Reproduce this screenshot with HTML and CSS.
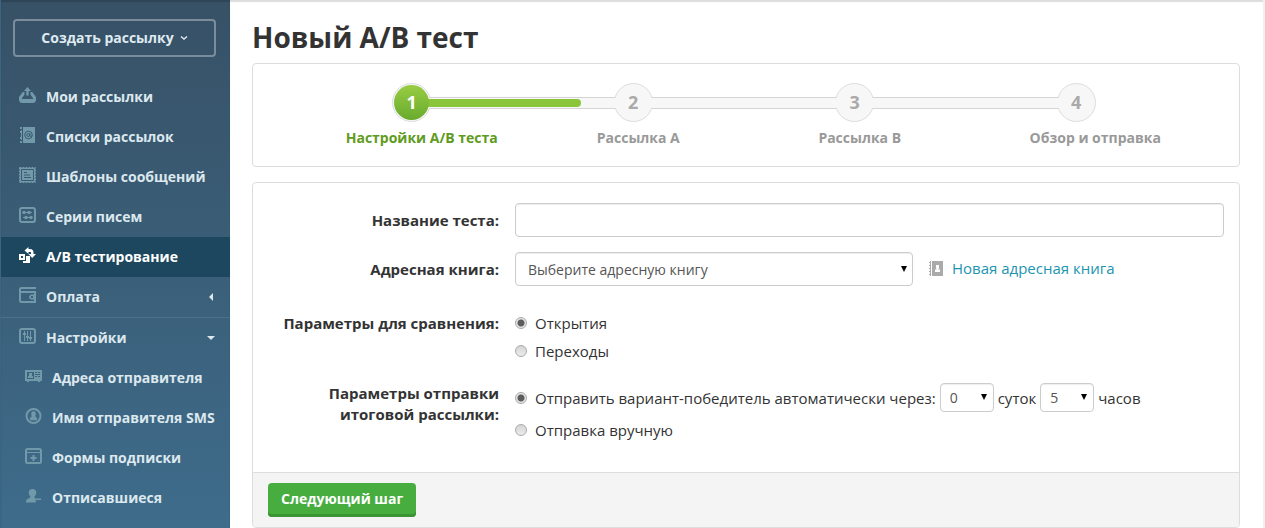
FILE: index.html
```
<!DOCTYPE html>
<html lang="ru">
<head>
  <meta charset="UTF-8">
  <meta name="viewport" content="width=device-width, initial-scale=1.0">
  <title>Новый А/В тест</title>
  <link rel="stylesheet" href="styles.css">
</head>
<body>
  <div class="page">
    <aside class="sidebar">
      <button class="create-btn" type="button">
        Создать рассылку
        <svg width="8" height="8" viewBox="0 0 8 8"><path d="M1 3.500l3 2.500 3-2.500" fill="none" stroke="currentColor" stroke-width="1.400"/></svg>
      </button>
      <nav>
        <ul class="menu">
          <li><a href="#">
            <svg class="icon" viewBox="0 0 17 16"><path d="M8.500 0L12 4H9.700v4.500H7.300V4H5z"/><path class="line" d="M5.500 6.500H4.500L1.500 10.500v2q0 2 2 2h10q2 0 2-2v-2l-3-4h-1" stroke-width="3"/><path d="M3 12h11v3H3z"/></svg>
            Мои рассылки</a></li>
          <li><a href="#">
            <svg class="icon" viewBox="0 0 17 16"><path d="M4 0h12v16H4zM1 0h2v2H1zM2 3h1v10H2zM1 4h1v2H1zM1 10h1v2H1zM1 14h2v2H1z"/><g class="cut"><circle cx="9.500" cy="8" r="3.800"/><circle cx="9.300" cy="8" r="1.500"/><path d="M10.800 6.300v2.500q.8 1.200 2.300 0"/></g></svg>
            Списки рассылок</a></li>
          <li><a href="#">
            <svg class="icon" viewBox="0 0 17 16"><path d="M1 1h15v14H1z"/><path class="line" d="M.5.500h16v15H.5z" stroke-dasharray="2 1"/><path class="cut" d="M2.500 2.500h12v11h-12zM5 5.500h3M5 8h6M5 10.500h7"/></svg>
            Шаблоны сообщений</a></li>
          <li><a href="#">
            <svg class="icon" viewBox="0 0 17 16"><rect class="line" x="1" y="1" width="15" height="14" rx="2" stroke-width="2"/><circle cx="5" cy="5.500" r="1.800"/><circle cx="10" cy="5.500" r="1.800"/><circle cx="7" cy="10.500" r="1.800"/><circle cx="12" cy="10.500" r="1.800"/><path d="M5 5h8v1H5zM4 10h9v1H4z"/></svg>
            Серии писем</a></li>
          <li class="active"><a href="#">
            <svg class="icon" viewBox="0 0 17 16"><path fill-rule="evenodd" d="M0 7h6v6H0zM2 9v2h2V9z"/><path d="M7 9h4v7H4v-2h3zM5.500 3.500L9.500 0v2H11q3.500 0 3.500 3.500V7H17l-3.800 4L9.500 7H12V5.500Q12 5 11.500 5h-2v2z"/></svg>
            А/В тестирование</a></li>
          <li><a href="#">
            <svg class="icon" viewBox="0 0 17 16"><path class="line" d="M17 1H2.500Q1 1 1 2.500v11Q1 15 2.500 15H16V5H1" stroke-width="2"/><path fill-rule="evenodd" d="M12 7.500h3v5h-3q-2-1-2-2.500t2-2.500zM12 9v2h2V9z"/></svg>
            Оплата
            <svg class="arrow" viewBox="0 0 8 8"><path d="M6 0v8L2 4z"/></svg></a></li>
          <li class="divided"><a href="#">
            <svg class="icon" viewBox="0 0 17 16"><rect class="line" x="1" y="1" width="15" height="14" rx="2" stroke-width="2"/><path d="M5 3h1v10H5zM8 3h1v10H8zM11 3h1v10h-1zM4 5h3v2H4zM7 8h3v2H7zM10 9h3v2h-3z"/></svg>
            Настройки
            <svg class="arrow" viewBox="0 0 8 8"><path d="M0 2h8L4 6z"/></svg></a>
            <ul class="submenu">
              <li><a href="#">
                <svg class="icon" viewBox="0 0 17 16"><path d="M0 2h17v11h-2v1h-2v-1H4v1H2v-1H0z"/><path class="hole" d="M2 4h7v7H2zM10 4h2v1h-2zM13 4h2v1h-2zM10 6h5v1h-5zM10 8h2v1h-2zM13 8h2v1h-2z"/><path d="M4 5h3v3H4zM3 8h5v2H3z"/></svg>
                Адреса отправителя</a></li>
              <li><a href="#">
                <svg class="icon" viewBox="0 0 17 16"><circle class="line" cx="8.500" cy="8" r="7" stroke-width="2"/><path d="M8.500 3.200q2.300 0 2.300 2.700 0 1.200-.8 2.300 2 .6 2 2.600v1.400H5v-1.400q0-2 2-2.600-.8-1.100-.8-2.300 0-2.700 2.300-2.700z"/></svg>
                Имя отправителя SMS</a></li>
              <li><a href="#">
                <svg class="icon" viewBox="0 0 17 16"><rect class="line" x="1" y="1" width="15" height="14" rx="1.500" stroke-width="2"/><path d="M2 4h13v1H2zM7.500 7h2v2h2v2h-2v2h-2v-2h-2V9h2z"/></svg>
                Формы подписки</a></li>
              <li><a href="#">
                <svg class="icon" viewBox="0 0 17 16"><path d="M7.500 1q3.800 0 3.800 3.800 0 2.400-2 4 .2 1.200 1.500 1.700V14.500H1v-1.500q0-1.800 2.500-2.500 2-.6 2-1.700Q3.700 7.200 3.700 4.800 3.700 1 7.500 1zM11 10.500h5V12h-5z"/></svg>
                Отписавшиеся</a></li>
            </ul>
          </li>
        </ul>
      </nav>
    </aside>

    <main class="content">
      <h1>Новый А/В тест</h1>

      <section class="panel steps-panel">
        <ol class="steps">
          <li class="step current"><span class="circle"><span class="num">1</span></span><span class="step-name">Настройки А/В теста</span></li>
          <li class="step"><span class="circle"><span class="num">2</span></span><span class="step-name">Рассылка А</span></li>
          <li class="step"><span class="circle"><span class="num">3</span></span><span class="step-name">Рассылка В</span></li>
          <li class="step last"><span class="circle"><span class="num">4</span></span><span class="step-name">Обзор и отправка</span></li>
          <li class="track" aria-hidden="true"></li>
          <li class="track-fill" aria-hidden="true"><span class="progress" style="width: 25.400%"></span></li>
        </ol>
      </section>

      <form class="panel">
        <div class="form-body">
          <div class="row">
            <label class="row-label" for="test-name">Название теста:</label>
            <input class="text-input" type="text" id="test-name">
          </div>
          <div class="row book-row">
            <label class="row-label" for="book">Адресная книга:</label>
            <div class="book">
              <span class="select book-select">
                <select id="book"><option>Выберите адресную книгу</option></select>
              </span>
              <a class="new-book" href="#">
                <svg viewBox="0 0 14 15" width="14" height="15"><path d="M3 0h11v15H3zM0 1h2v1H0zM0 4h2v1H0zM0 7h2v1H0zM0 10h2v1H0zM0 13h2v1H0zM1 0h1v15H1z"/><path fill="#fff" d="M7 4h3v3.500H9.500v1H11V11H6V8.500h1.500v-1H7z"/></svg>
                Новая адресная книга
              </a>
            </div>
          </div>
          <div class="row compare-row" role="radiogroup" aria-labelledby="compare-label">
            <span class="row-label" id="compare-label">Параметры для сравнения:</span>
            <div class="options">
              <label class="option"><input type="radio" name="compare" checked>Открытия</label>
              <label class="option"><input type="radio" name="compare">Переходы</label>
            </div>
          </div>
          <div class="row send-row" role="radiogroup" aria-labelledby="send-label">
            <span class="row-label" id="send-label">Параметры отправки итоговой рассылки:</span>
            <div class="options">
              <div class="delay">
                <label class="option"><input type="radio" name="send" checked>Отправить вариант-победитель автоматически через:</label>
                <span class="select small"><select id="days"><option>0</option><option>1</option></select></span>
                <label for="days">суток</label>
                <span class="select small"><select id="hours"><option>5</option><option>6</option></select></span>
                <label for="hours">часов</label>
              </div>
              <label class="option"><input type="radio" name="send">Отправка вручную</label>
            </div>
          </div>
        </div>
        <div class="form-footer">
          <button class="next-btn" type="submit">Следующий шаг</button>
        </div>
      </form>
    </main>
  </div>
</body>
</html>
```
FILE: styles.css
```
* {
  box-sizing: border-box;
}
body {
  margin: 0;
  font-family: "Open Sans", "Noto Sans", sans-serif;
  font-size: 15px;
  line-height: 20px;
  color: #333;
  background-color: #fff;
}
button, input, select {
  font-family: inherit;
}
ul, ol {
  list-style: none;
  margin: 0;
  padding: 0;
}
a {
  text-decoration: none;
}
.page {
  display: flex;
  min-height: 100vh;
  border-right: 2px solid #f0f0f0;
}

/* sidebar */
.sidebar {
  flex: 0 0 230px;
  padding-top: 19px;
  background: linear-gradient(#375166, #3e6c8b);
  border-left: 1px solid #3d6582;
  box-shadow: inset 0 2px 1px #2e4557;
}
.create-btn {
  display: flex;
  align-items: center;
  justify-content: center;
  gap: 6px;
  width: 203px;
  height: 38px;
  margin: 0 12px 20px;
  padding: 0 0 2px;
  font-size: 14px;
  font-weight: bold;
  color: #dfeaf0;
  background: none;
  border: 2px solid #7b8d9b;
  border-radius: 4px;
  cursor: pointer;
}
.menu a {
  display: flex;
  align-items: center;
  gap: 10px;
  height: 40px;
  padding: 0 15px 0 18px;
  font-size: 14px;
  font-weight: bold;
  color: #dce8ee;
  white-space: nowrap;
}
.menu .active a {
  color: #fff;
  background-color: #1d475e;
}
.menu .divided {
  border-top: 1px solid #4b7189;
}
.submenu a {
  padding: 0 0 0 24px;
}
.icon {
  flex: none;
  width: 17px;
  height: 16px;
  margin-bottom: 4px;
  fill: #7199a9;
}
.icon .line {
  fill: none;
  stroke: #7199a9;
}
.icon .cut {
  fill: none;
  stroke: #3a5b73;
}
.icon .hole {
  fill: #3c637e;
}
.active .icon {
  fill: #fff;
}
.arrow {
  width: 8px;
  height: 8px;
  margin-left: auto;
  fill: #dce8ee;
}

/* content */
.content {
  flex: 1;
  min-width: 0;
  padding: 19px 23px 0 22px;
  box-shadow: inset 0 2px 1px #ddd;
}
h1 {
  margin: 0 0 8px;
  font-size: 28px;
  line-height: 36px;
}
.panel {
  border: 1px solid #ddd;
  border-radius: 4px;
}
.steps-panel {
  margin-bottom: 15px;
  padding: 19px 52px 18px 48px;
}

/* the track border lies under the circles, its fill over them */
.steps {
  position: relative;
  display: flex;
  isolation: isolate;
}
.step {
  flex: 1;
  display: flex;
  flex-direction: column;
  align-items: center;
  gap: 6px;
  font-size: 14px;
  font-weight: bold;
  color: #999;
}
.step-name {
  padding-left: 10px;
}
.current .step-name {
  padding-left: 20px;
}
.last .step-name {
  padding-left: 38px;
}
.circle {
  display: flex;
  align-items: center;
  justify-content: center;
  width: 39px;
  height: 39px;
  background-color: #f7f7f7;
  border: 1px solid #ddd;
  border-radius: 50%;
}
.num {
  position: relative;
  z-index: 2;
  width: 35px;
  height: 35px;
  font-size: 18px;
  line-height: 35px;
  text-align: center;
  color: #aaa;
  border-radius: 50%;
}
.current {
  color: #5f9b22;
}
.current .num {
  color: #fff;
  background: linear-gradient(#98cd43, #69aa2d);
}
.track,
.track-fill {
  position: absolute;
  left: 12.5%;
  right: 12.5%;
}
.track {
  z-index: -1;
  top: 14px;
  height: 12px;
  border: 1px solid #d5d5d5;
}
.track-fill {
  z-index: 1;
  top: 15px;
  height: 10px;
  padding: 1px 0;
  background-color: #f7f7f7;
}
.progress {
  display: block;
  height: 8px;
  background-color: #8bc53a;
  border-radius: 4px;
}

/* form */
.form-body {
  padding: 20px 15px 32px;
}
.row {
  display: flex;
  align-items: center;
  gap: 16px;
}
.row-label {
  flex: 0 0 231px;
  font-weight: bold;
  text-align: right;
}
.text-input {
  flex: 1;
  min-width: 0;
  height: 34px;
  padding: 6px 12px;
  font-size: 14px;
  border: 1px solid #ccc;
  border-radius: 4px;
  box-shadow: inset 0 1px 1px #eee;
}
.book-row {
  margin-top: 15px;
}
.book {
  flex: 1;
  display: flex;
  align-items: center;
  gap: 16px;
}
.select {
  position: relative;
  display: inline-block;
}
.select::after {
  content: "";
  position: absolute;
  right: 6px;
  top: 50%;
  margin-top: -3px;
  border: 3px solid transparent;
  border-top: 6px solid #000;
  border-bottom: 0;
  pointer-events: none;
}
.select select {
  appearance: none;
  width: 100%;
  height: 34px;
  padding: 0 12px;
  font-size: 14px;
  color: #555;
  background-color: #fff;
  border: 1px solid #ccc;
  border-radius: 4px;
  box-shadow: inset 0 1px 1px #eee;
}
.book-select {
  flex: 0 1 398px;
}
.new-book {
  display: flex;
  align-items: center;
  gap: 9px;
  padding-bottom: 2px;
  color: #1b95b0;
}
.new-book svg {
  fill: #aaa;
}
.compare-row,
.send-row {
  align-items: flex-start;
}
.compare-row {
  margin-top: 27px;
}
.send-row {
  margin-top: 22px;
}
.send-row .row-label {
  padding-left: 40px;
  line-height: 21px;
}
.options {
  display: flex;
  flex-direction: column;
  gap: 8px;
}
.option {
  display: flex;
  align-items: center;
  gap: 8px;
}
.option input {
  appearance: none;
  flex: none;
  width: 12px;
  height: 12px;
  margin: 0;
  background: linear-gradient(#d5d5d5, #ececec);
  border: 1px solid #aaa;
  border-radius: 50%;
}
.option input:checked {
  background: radial-gradient(circle, #5c5c5c 3px, #e5e5e5 4px);
}
.delay {
  display: flex;
  align-items: center;
  flex-wrap: wrap;
  gap: 4px;
}
.small {
  width: 54px;
}
.small::after {
  right: 7px;
  margin-top: -4px;
}
.small select {
  display: block;
  height: 29px;
  padding: 0 9px;
}
.form-footer {
  padding: 10px 15px;
  background-color: #f4f4f4;
  border-top: 1px solid #ddd;
  border-radius: 0 0 4px 4px;
}
.next-btn {
  display: block;
  height: 34px;
  padding: 0 13px 3px;
  font-size: 14px;
  font-weight: bold;
  color: #fff;
  background-color: #47ad3f;
  border: 0;
  border-radius: 4px;
  box-shadow: inset 0 -3px #3b9434;
  cursor: pointer;
}
```
